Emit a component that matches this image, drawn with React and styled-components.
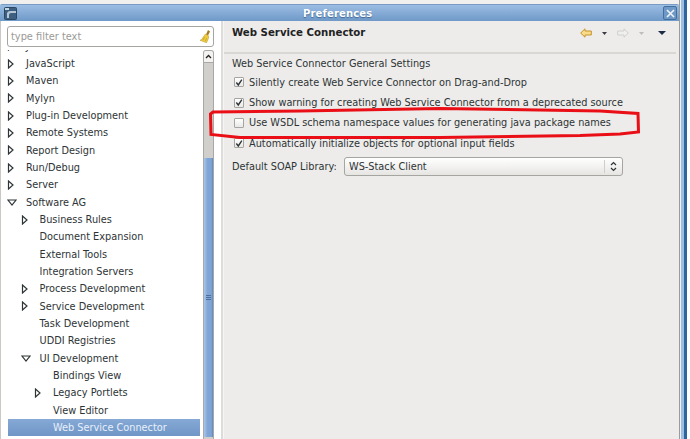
import styled, { createGlobalStyle } from "styled-components";

const tree = [
  { label: "Java", level: 0, arrow: "right" },
  { label: "JavaScript", level: 0, arrow: "right" },
  { label: "Maven", level: 0, arrow: "right" },
  { label: "Mylyn", level: 0, arrow: "right" },
  { label: "Plug-in Development", level: 0, arrow: "right" },
  { label: "Remote Systems", level: 0, arrow: "right" },
  { label: "Report Design", level: 0, arrow: "right" },
  { label: "Run/Debug", level: 0, arrow: "right" },
  { label: "Server", level: 0, arrow: "right" },
  { label: "Software AG", level: 0, arrow: "down" },
  { label: "Business Rules", level: 1, arrow: "right" },
  { label: "Document Expansion", level: 1 },
  { label: "External Tools", level: 1 },
  { label: "Integration Servers", level: 1 },
  { label: "Process Development", level: 1, arrow: "right" },
  { label: "Service Development", level: 1, arrow: "right" },
  { label: "Task Development", level: 1 },
  { label: "UDDI Registries", level: 1 },
  { label: "UI Development", level: 1, arrow: "down" },
  { label: "Bindings View", level: 2 },
  { label: "Legacy Portlets", level: 2, arrow: "right" },
  { label: "View Editor", level: 2 },
  { label: "Web Service Connector", level: 2, selected: true },
];

const options = [
  { label: "Silently create Web Service Connector on Drag-and-Drop", checked: true },
  { label: "Show warning for creating Web Service Connector from a deprecated source", checked: true },
  { label: "Use WSDL schema namespace values for generating java package names", checked: false },
  { label: "Automatically initialize objects for optional input fields", checked: true },
];

export default function App() {
  return (
    <Page>
      <GlobalStyle />
      <Window>
        <TitleBar>
          <WindowIcon viewBox="0 0 13 13">
            <rect x="0.5" y="0.5" width="12" height="12" rx="1" fill="#3f5f80" stroke="#2c4763" />
            <rect x="1" y="1" width="4" height="2" fill="#c6d4e2" />
            <path d="M3 11V6q1-2 3-2h6v2H7q-2 0-2 2v3z" fill="#b7c6d6" />
          </WindowIcon>
          <TitleText>Preferences</TitleText>
          <CloseButton>
            <svg width="9" height="9" viewBox="0 0 9 9">
              <path d="M1 1l7 7M8 1l-7 7" stroke="#eef4fa" strokeWidth="1.6" />
            </svg>
          </CloseButton>
        </TitleBar>
        <Body>
          <Sidebar>
            <FilterBox>
              <FilterText>type filter text</FilterText>
              <svg width="13" height="15" viewBox="0 0 13 15">
                <path d="M9 1l2 1.500-2 4-2-1z" fill="#a8791e" />
                <path d="M6.500 5l3 1.800 0 2.500-2 4.500-6.500-2.500q3-1 3-3z" fill="#eecb3c" stroke="#b8952a" strokeWidth="0.5" />
                <path d="M4 11l1.500-3M6.500 12l1-3" stroke="#b8952a" strokeWidth="0.6" />
              </svg>
            </FilterBox>
            <TreeArea>
              <TreeList>
                {tree.map((item) => (
                  <TreeRow key={item.label} $level={item.level} $selected={item.selected}>
                    <Twisty>
                      {item.arrow === "right" && (
                        <svg width="7" height="10" viewBox="0 0 7 10">
                          <path d="M1.500 1v8L6 5z" fill="#fff" stroke="#2e3436" strokeWidth="1.200" />
                        </svg>
                      )}
                      {item.arrow === "down" && (
                        <svg width="10" height="7" viewBox="0 0 10 7">
                          <path d="M1 1h8L5 6z" fill="#fff" stroke="#2e3436" strokeWidth="1.200" />
                        </svg>
                      )}
                    </Twisty>
                    {item.label}
                  </TreeRow>
                ))}
              </TreeList>
              <ScrollBar>
                <ScrollUp>
                  <svg width="7" height="5" viewBox="0 0 7 5">
                    <path d="M1 4l2.500-2.500L6 4" fill="none" stroke="#222" strokeWidth="1.300" />
                  </svg>
                </ScrollUp>
                <ScrollTrack />
                <ScrollThumb>
                  <Grip />
                </ScrollThumb>
              </ScrollBar>
            </TreeArea>
          </Sidebar>
          <Sash />
          <Content>
            <Header>
              <PageTitle>Web Service Connector</PageTitle>
              <NavIcons>
                <svg width="12" height="10" viewBox="0 0 12 10">
                  <path d="M0.700 5L5 0.800V3h6.300v4H5v2.200z" fill="#f7dd8a" stroke="#c8922a" />
                </svg>
                <Caret viewBox="0 0 5 3" $color="#3a3a44"><path d="M0 0h5L2.500 3z" /></Caret>
                <svg width="12" height="10" viewBox="0 0 12 10">
                  <path d="M11.300 5L7 0.800V3H0.700v4H7v2.200z" fill="#efefed" stroke="#cfcfcc" />
                </svg>
                <Caret viewBox="0 0 5 3" $color="#bdbdbb"><path d="M0 0h5L2.500 3z" /></Caret>
                <MenuCaret viewBox="0 0 8 4"><path d="M0 0h8L4 4z" /></MenuCaret>
              </NavIcons>
            </Header>
            <Divider />
            <SectionTitle>Web Service Connector General Settings</SectionTitle>
            <OptionList>
              {options.map((opt) => (
                <OptionRow key={opt.label}>
                  <CheckBox>
                    {opt.checked && (
                      <svg width="9" height="9" viewBox="0 0 9 9">
                        <path d="M1.500 4.500L3.700 7.300 7.700 1.200" fill="none" stroke="#2e3436" strokeWidth="1.500" />
                      </svg>
                    )}
                  </CheckBox>
                  {opt.label}
                </OptionRow>
              ))}
            </OptionList>
            <LibraryRow>
              <LibraryLabel>Default SOAP Library:</LibraryLabel>
              <SelectBox>
                <span>WS-Stack Client</span>
                <SelectArrows>
                  <svg width="7" height="11" viewBox="0 0 7 11">
                    <path d="M1 4l2.500-2.500L6 4M1 7l2.500 2.500L6 7" fill="none" stroke="#2e3436" strokeWidth="1.200" />
                  </svg>
                </SelectArrows>
              </SelectBox>
            </LibraryRow>
          </Content>
        </Body>
      </Window>
      <BlueEdge />
      <Highlight width="690" height="439" viewBox="0 0 690 439">
        <path
          d="M213 112L300 111L440 108.500L600 111L638 113.500L638.500 132L620 134L580 135.500L440 137.500L240 137.500L211 134.500L210.500 114Z"
          fill="none"
          stroke="#ea0f16"
          strokeWidth="3"
        />
      </Highlight>
    </Page>
  );
}

const GlobalStyle = createGlobalStyle`
  html, body {
    margin: 0;
    padding: 0;
    background: #fff;
  }
`;

const Page = styled.div`
  position: relative;
  width: 687px;
  height: 439px;
  overflow: hidden;
  display: flex;
  font-family: "DejaVu Sans", sans-serif;
  font-size: 9.750px;
  color: #2e3436;
`;

const Window = styled.div`
  width: 680px;
  flex-shrink: 0;
  padding-top: 4px;
  box-sizing: border-box;
  display: flex;
  flex-direction: column;
  background: linear-gradient(#f1f0ee 0 4px, #edecea 4px);
  border-right: 1px solid #9c9b97;
`;

const BlueEdge = styled.div`
  flex: 1;
  background: linear-gradient(90deg, #eef2f7 0 1px, #9dbde2 1px 4px, #2f659f 4px);
`;

const TitleBar = styled.div`
  position: relative;
  height: 17px;
  flex-shrink: 0;
  display: flex;
  align-items: center;
  justify-content: space-between;
  padding: 0 2px 0 4px;
  background: linear-gradient(#9bbde3, #6f99c8);
  border-top: 1px solid #7a9cc4;
  border-radius: 2px 2px 0 0;
  box-sizing: border-box;
`;

const WindowIcon = styled.svg`
  width: 13px;
  height: 13px;
`;

const TitleText = styled.div`
  position: absolute;
  left: 303px;
  color: #fff;
  font-weight: bold;
  font-size: 10px;
  letter-spacing: 0.150px;
  text-shadow: 0 1px 1px #3f6792;
`;

const CloseButton = styled.div`
  width: 14px;
  height: 14px;
  box-sizing: border-box;
  display: flex;
  align-items: center;
  justify-content: center;
  border: 1px solid #426f9f;
  border-radius: 2px;
  background: #6e98c6;
`;

const Body = styled.div`
  flex: 1;
  min-height: 0;
  display: flex;
`;

const Sidebar = styled.div`
  width: 221px;
  flex-shrink: 0;
  display: flex;
  flex-direction: column;
  padding-right: 7px;
  background: #fff;
  box-sizing: border-box;
  border-left: 1px solid #c9c8c4;
`;

const FilterBox = styled.div`
  height: 21px;
  margin: 5px 0 3px 6px;
  box-sizing: border-box;
  display: flex;
  align-items: center;
  justify-content: space-between;
  padding: 0 1px 0 3px;
  border: 1px solid #a5a5a1;
  border-radius: 3px;
  background: #fff;
`;

const FilterText = styled.span`
  color: #9a9a96;
  font-size: 9.800px;
`;

const TreeArea = styled.div`
  flex: 1;
  min-height: 0;
  display: flex;
  overflow: hidden;
`;

const TreeList = styled.div`
  flex: 1;
  min-width: 0;
  margin-top: -12.400px;
`;

const TreeRow = styled.div`
  height: 17.330px;
  display: flex;
  align-items: center;
  white-space: nowrap;
  margin: ${(p) => (p.$selected ? "0 3px 0 7px" : "0")};
  padding-left: ${(p) => (p.$selected ? 6 + p.$level * 13.500 - 7 : 6 + p.$level * 13.500)}px;
  background: ${(p) => (p.$selected ? "linear-gradient(#86a9d6, #6f96c6)" : "transparent")};
  color: ${(p) => (p.$selected ? "#e8f0fa" : "#2e3436")};
  box-sizing: border-box;
`;

const Twisty = styled.span`
  width: 19px;
  height: 10px;
  flex-shrink: 0;
  display: flex;
  align-items: center;
`;

const ScrollBar = styled.div`
  width: 11px;
  flex-shrink: 0;
  display: flex;
  flex-direction: column;
  padding-bottom: 2px;
  background: #d0cfcb;
  border: 1px solid #a9a8a4;
  border-bottom: none;
  border-radius: 3px 3px 0 0;
  box-sizing: border-box;
`;

const ScrollUp = styled.div`
  height: 11px;
  display: flex;
  align-items: center;
  justify-content: center;
  background: #f4f3f1;
  border-bottom: 1px solid #a9a8a4;
  border-radius: 2px 2px 0 0;
`;

const ScrollTrack = styled.div`
  height: 95px;
`;

const ScrollThumb = styled.div`
  flex: 1;
  display: flex;
  align-items: center;
  justify-content: center;
  background: linear-gradient(90deg, #a9c5e8, #7fa5d6 40%, #7fa5d6 80%, #5c87bd);
`;

const Grip = styled.div`
  width: 5px;
  height: 6px;
  background: repeating-linear-gradient(#4c6f9c 0 1px, transparent 1px 2px);
`;

const Sash = styled.div`
  width: 3px;
  flex-shrink: 0;
  background: linear-gradient(90deg, #dddcd9 0 2px, #f6f5f4 2px);
`;

const Content = styled.div`
  flex: 1;
  min-width: 0;
  padding: 6px 3px 0 0;
  display: flex;
  flex-direction: column;
`;

const Header = styled.div`
  height: 25px;
  display: flex;
  align-items: flex-start;
  justify-content: space-between;
  padding: 0 10px 0 8px;
`;

const PageTitle = styled.div`
  font-weight: bold;
  font-size: 10.200px;
  line-height: 12px;
  color: #1f2224;
`;

const NavIcons = styled.div`
  display: flex;
  align-items: center;
  gap: 10px;
  margin-top: 1px;
`;

const Caret = styled.svg`
  width: 5px;
  height: 3px;
  fill: ${(p) => p.$color};
`;

const MenuCaret = styled.svg`
  width: 8px;
  height: 4px;
  margin-left: 4px;
  fill: #1c2a44;
`;

const Divider = styled.div`
  height: 2px;
  background: #d8d7d3;
`;

const SectionTitle = styled.div`
  margin: 3px 0 1px 8px;
  height: 14px;
  line-height: 14px;
`;

const OptionList = styled.div`
  display: flex;
  flex-direction: column;
  padding-left: 10px;
`;

const OptionRow = styled.div`
  height: 20.400px;
  display: flex;
  align-items: center;
  gap: 5px;
  white-space: nowrap;
`;

const CheckBox = styled.span`
  width: 10px;
  height: 10px;
  flex-shrink: 0;
  display: flex;
  align-items: center;
  justify-content: center;
  border: 1px solid #a5a5a1;
  border-radius: 1px;
  box-sizing: border-box;
  background: linear-gradient(#fff, #e9e8e5);
`;

const LibraryRow = styled.div`
  display: flex;
  align-items: center;
  margin: 3px 0 0 8px;
`;

const LibraryLabel = styled.span`
  width: 112px;
  flex-shrink: 0;
`;

const SelectBox = styled.div`
  width: 279px;
  height: 19px;
  box-sizing: border-box;
  display: flex;
  align-items: center;
  justify-content: space-between;
  padding-left: 4px;
  border: 1px solid #a5a5a1;
  border-radius: 3px;
  background: linear-gradient(#fff, #e6e5e2);
`;

const SelectArrows = styled.span`
  height: 13px;
  width: 17px;
  display: flex;
  align-items: center;
  justify-content: center;
  border-left: 1px solid #cfcecb;
`;

const Highlight = styled.svg`
  position: absolute;
  left: 0;
  top: 0;
  pointer-events: none;
`;
